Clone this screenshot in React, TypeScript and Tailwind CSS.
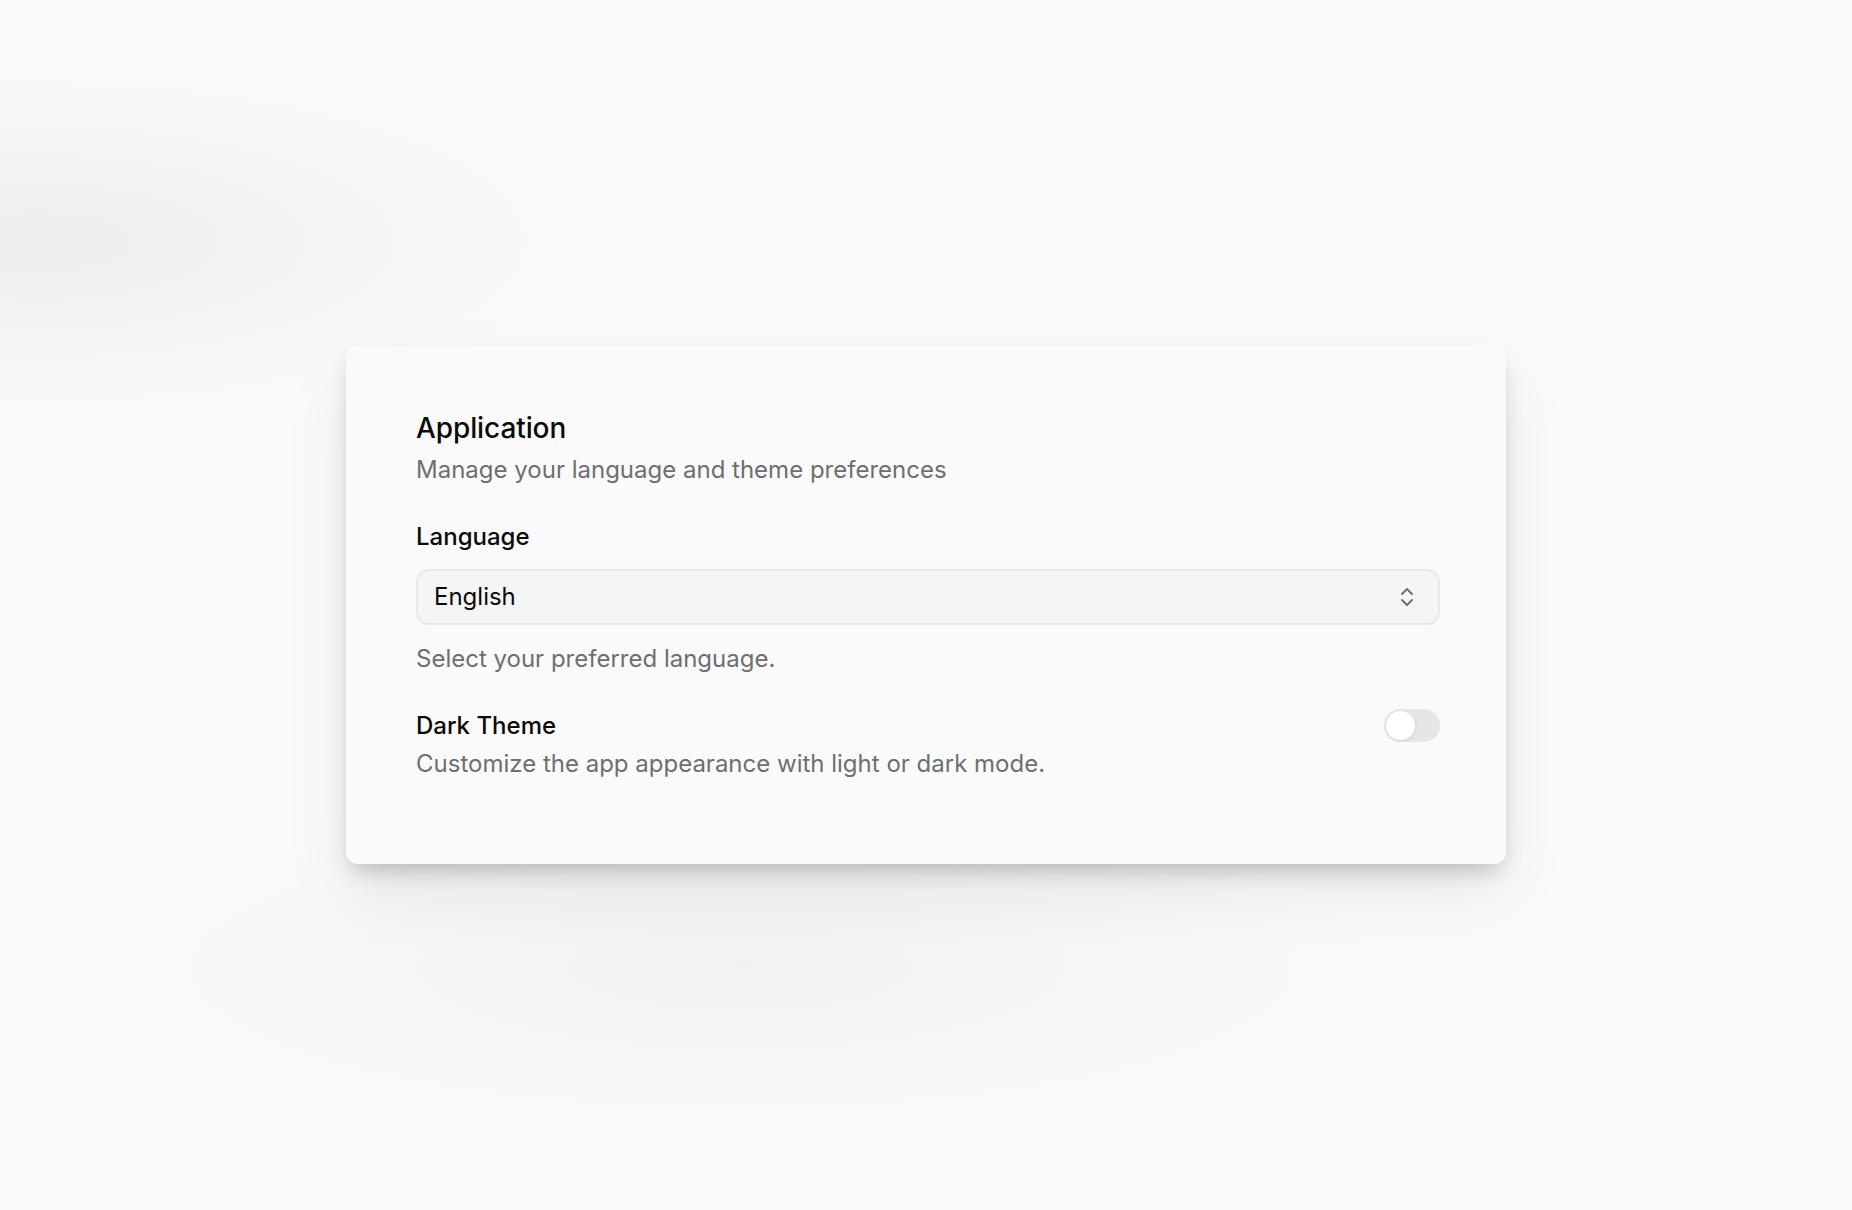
import { useState } from 'react'

const languages = ['English', 'Deutsch', 'Español', 'Français', '日本語']

function ChevronsUpDown() {
  return (
    <svg width="12" height="20" viewBox="0 0 12 20" fill="none" stroke="#6b6b70" strokeWidth="1.8" strokeLinecap="round" strokeLinejoin="round">
      <path d="M1 7 6 2l5 5" />
      <path d="M1 13l5 5 5-5" />
    </svg>
  )
}

function Toggle({ checked, onChange }: { checked: boolean; onChange: (v: boolean) => void }) {
  return (
    <button
      type="button"
      role="switch"
      aria-checked={checked}
      onClick={() => onChange(!checked)}
      className={`flex h-[33px] w-[56px] items-center rounded-full p-px transition-colors ${checked ? 'bg-[#18181b]' : 'bg-[#e6e6e6]'}`}
    >
      <span
        className={`h-[31px] w-[31px] rounded-full border border-[#e2e2e2] bg-white shadow-[0_1px_2px_rgba(0,0,0,0.06)] transition-transform ${checked ? 'translate-x-[23px]' : 'translate-x-0'}`}
      />
    </button>
  )
}

export default function App() {
  const [language, setLanguage] = useState('English')
  const [dark, setDark] = useState(false)

  return (
    <div
      className="flex min-h-screen items-center justify-center bg-[#fafafa] bg-[radial-gradient(ellipse_30%_15%_at_2%_20%,rgba(0,0,0,0.05),transparent),radial-gradient(ellipse_36%_14%_at_40%_80%,rgba(0,0,0,0.035),transparent)] font-['Inter','Noto_Sans',sans-serif]"
    >
      <div className="w-[1160px] rounded-[12px] bg-[#fafafa] pt-[65px] pr-[66px] pb-[85px] pl-[70px] shadow-[0_12px_22px_-6px_rgba(0,0,0,0.22),0_30px_70px_rgba(0,0,0,0.07)]">
        <h2 className="text-[28px] leading-[34px] font-medium tracking-[-0.1px] text-[#0a0a0a]">Application</h2>
        <p className="mt-[10px] text-[24px] leading-[30px] text-[#6e6e73]">Manage your language and theme preferences</p>

        <div className="mt-[37px]">
          <label className="block text-[24px] leading-[30px] font-medium text-[#0a0a0a]">Language</label>
          <div className="relative mt-[17px]">
            <select
              value={language}
              onChange={(e) => setLanguage(e.target.value)}
              className="h-[56px] w-full appearance-none rounded-[13px] border-2 border-[#e8e8e8] bg-[#f5f5f5] pr-12 pl-[16px] text-[24px] text-[#0a0a0a] outline-none"
            >
              {languages.map((l) => (
                <option key={l} value={l}>
                  {l}
                </option>
              ))}
            </select>
            <span className="pointer-events-none absolute top-1/2 right-[27px] -translate-y-1/2">
              <ChevronsUpDown />
            </span>
          </div>
          <p className="mt-[19px] text-[24px] leading-[30px] text-[#6e6e73]">Select your preferred language.</p>
        </div>

        <div className="mt-[35px]">
          <div className="flex items-center justify-between">
            <span className="text-[24px] leading-[30px] font-medium text-[#0a0a0a]">Dark Theme</span>
            <Toggle checked={dark} onChange={setDark} />
          </div>
          <p className="mt-[7px] text-[24px] leading-[30px] text-[#6e6e73]">Customize the app appearance with light or dark mode.</p>
        </div>
      </div>
    </div>
  )
}
